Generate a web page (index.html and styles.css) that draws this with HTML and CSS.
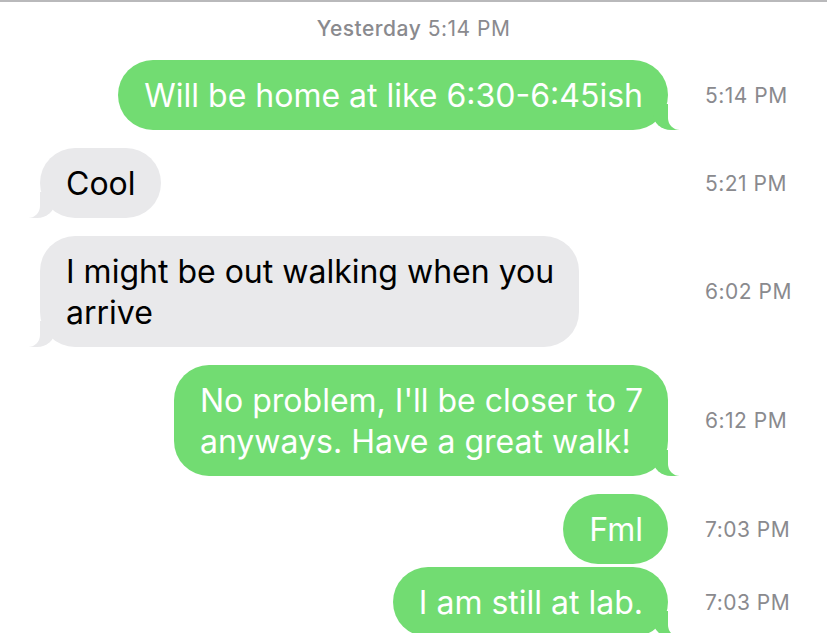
FILE: index.html
```html
<!DOCTYPE html>
<html lang="en">
<head>
    <meta charset="UTF-8">
    <meta name="viewport" content="width=device-width, initial-scale=1.0">
    <title>Messages</title>
    <link rel="stylesheet" href="styles.css">
</head>
<body>
    <div class="thread">
        <div class="stamp"><b>Yesterday</b> 5:14 PM</div>

        <div class="row out">
            <div class="bubble tail">Will be home at like 6:30-6:45ish</div>
            <span class="time">5:14 PM</span>
        </div>

        <div class="row in">
            <div class="bubble tail">Cool</div>
            <span class="time">5:21 PM</span>
        </div>

        <div class="row in">
            <div class="bubble tail">I might be out walking when you<br>arrive</div>
            <span class="time">6:02 PM</span>
        </div>

        <div class="row out">
            <div class="bubble tail">No problem, I'll be closer to 7<br>anyways. Have a great walk!</div>
            <span class="time">6:12 PM</span>
        </div>

        <div class="row out">
            <div class="bubble">Fml</div>
            <span class="time">7:03 PM</span>
        </div>

        <div class="row out next">
            <div class="bubble tail">I am still at lab.</div>
            <span class="time">7:03 PM</span>
        </div>
    </div>
</body>
</html>
```

FILE: styles.css
```css
body {
    margin: 0;
    background-color: #fff;
    font-family: Inter, "Liberation Sans", Arial, sans-serif;
    overflow: hidden;
}
.thread {
    border-top: 2px solid #b9b9bb;
    padding-bottom: 40px;
}
.stamp {
    text-align: center;
    color: #8a8a8e;
    font-size: 21px;
    letter-spacing: 0.5px;
    line-height: 24px;
    padding: 15px 0 1px;
}
.stamp b {
    font-weight: 500;
}
.row {
    display: grid;
    grid-template-columns: 1fr 122px;
    column-gap: 37px;
    align-items: center;
    margin-top: 18px;
}
.row.next {
    margin-top: 3px;
}
.row.in {
    padding-left: 40px;
}
.bubble {
    position: relative;
    font-size: 32px;
    line-height: 41px;
    padding: 15px 25px 14px 26px;
    border-radius: 35px;
}
.out .bubble {
    justify-self: end;
    background-color: #72dc72;
    color: #fff;
}
.in .bubble {
    justify-self: start;
    background-color: #e9e9eb;
    color: #000;
}
.time {
    color: #8a8a8e;
    font-size: 21px;
    letter-spacing: 0.5px;
}

/* bubble tails */
.tail::before,
.tail::after {
    content: "";
    position: absolute;
    bottom: 0;
    height: 26px;
}
.out .tail::before {
    right: -11px;
    width: 26px;
    background-color: #72dc72;
    border-bottom-left-radius: 18px 16px;
}
.out .tail::after {
    right: -28px;
    width: 28px;
    background-color: #fff;
    border-bottom-left-radius: 12px;
}
.in .tail::before {
    left: -11px;
    width: 26px;
    background-color: #e9e9eb;
    border-bottom-right-radius: 18px 16px;
}
.in .tail::after {
    left: -28px;
    width: 28px;
    background-color: #fff;
    border-bottom-right-radius: 12px;
}
```
